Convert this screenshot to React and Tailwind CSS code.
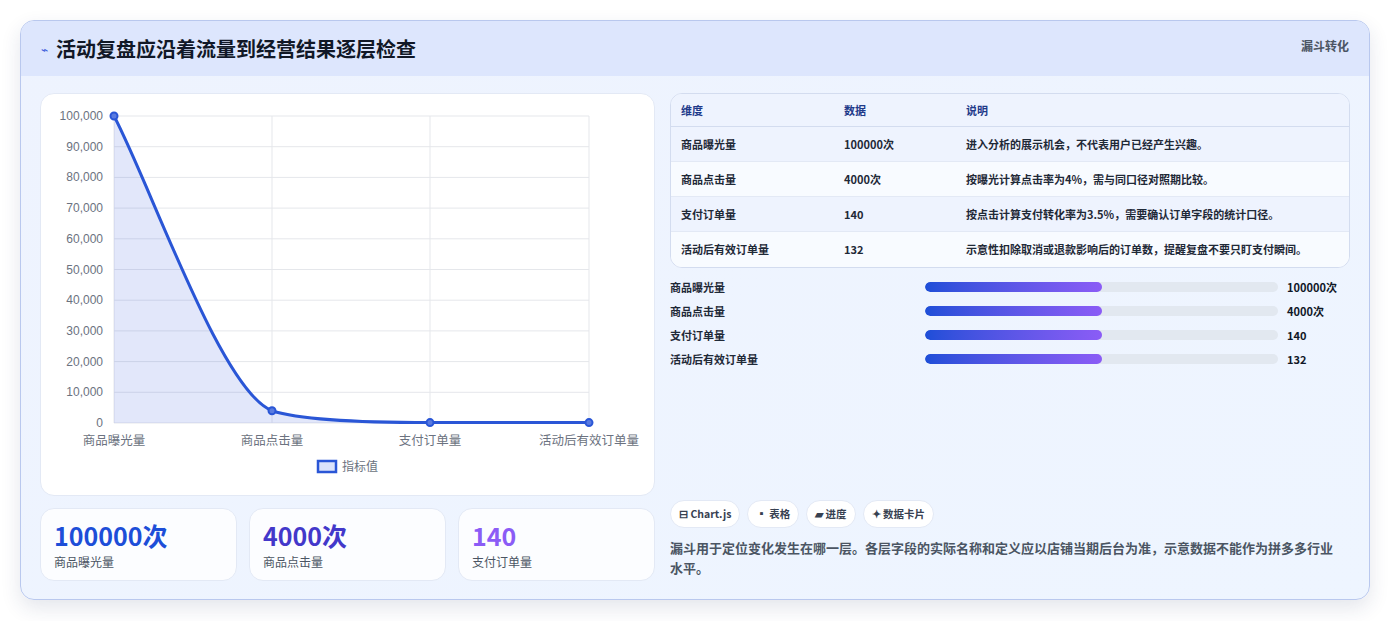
export default function App() {
  const f = { fontFamily: '"Noto Sans CJK SC","Noto Sans",sans-serif' };
  const yl = ["100,000","90,000","80,000","70,000","60,000","50,000","40,000","30,000","20,000","10,000","0"];
  const X0 = 73, X1 = 548, Y0 = 22, Y1 = 329;
  const xs = [73, 231, 389, 548];
  const yv = v => Y1 - (v / 100000) * (Y1 - Y0);
  const pts = [100000, 4000, 140, 132].map((v, i) => [xs[i], yv(v)]);
  const line = `M${pts[0][0]},${pts[0][1]} C110,${pts[0][1] + 70} 180,${pts[1][1] - 20} ${pts[1][0]},${pts[1][1]} C262,${pts[1][1] + 10} 340,${pts[2][1]} ${pts[2][0]},${pts[2][1]} C440,${pts[2][1]} 500,${pts[3][1]} ${pts[3][0]},${pts[3][1]}`;
  const rows = [
    ["商品曝光量", "100000次", "进入分析的展示机会，不代表用户已经产生兴趣。"],
    ["商品点击量", "4000次", "按曝光计算点击率为4%，需与同口径对照期比较。"],
    ["支付订单量", "140", "按点击计算支付转化率为3.5%，需要确认订单字段的统计口径。"],
    ["活动后有效订单量", "132", "示意性扣除取消或退款影响后的订单数，提醒复盘不要只盯支付瞬间。"],
  ];
  return (
    <div className="w-[1390px] h-[621px] bg-white pt-5 px-5" style={f}>
      <div className="h-[580px] rounded-[14px] border border-[#b9c8ee] shadow-[0_8px_20px_rgba(30,50,100,0.12)] overflow-hidden bg-gradient-to-br from-[#eef3fe] to-[#eef5ff] flex flex-col">
        <div className="h-[55px] bg-[#dde6fd] flex items-start justify-between px-5 shrink-0">
          <div className="flex items-center gap-2 mt-[13px]">
            <span className="text-[#3b5bdb] text-[12px]">⌁</span>
            <span className="text-[20px] font-bold text-[#111827]">活动复盘应沿着流量到经营结果逐层检查</span>
          </div>
          <span className="text-[12px] font-bold text-[#4b5563] mt-[16px]">漏斗转化</span>
        </div>
        <div className="flex gap-[15px] px-[19px] pt-[17px]">
          <div className="w-[615px] flex flex-col gap-3">
            <div className="h-[403px] bg-white rounded-[14px] border border-[#e3e9f5]">
              <svg width="615" height="403" className="block">
                {yl.map((t, i) => {
                  const y = Y0 + i * (Y1 - Y0) / 10;
                  return <g key={t}><line x1={X0} x2={X1} y1={y} y2={y} stroke="#e5e7eb" /><text x={62} y={y + 4} textAnchor="end" fontSize="12" fill="#6b7280" fontFamily="Liberation Sans, sans-serif">{t}</text></g>;
                })}
                {xs.map(x => <line key={x} x1={x} x2={x} y1={Y0} y2={Y1} stroke="#e5e7eb" />)}
                <path d={`${line} L548,329 L73,329 Z`} fill="rgba(59,91,219,0.15)" />
                <path d={line} fill="none" stroke="#2a56d6" strokeWidth="3" />
                {pts.map(([x, y]) => <circle key={x} cx={x} cy={y} r="3.5" fill="#5a7be0" stroke="#2a56d6" strokeWidth="2" />)}
                {["商品曝光量", "商品点击量", "支付订单量", "活动后有效订单量"].map((t, i) => <text key={t} x={xs[i]} y={351} textAnchor="middle" fontSize="12.5" fill="#6b7280">{t}</text>)}
                <rect x="277" y="367" width="18" height="11" fill="#dbe3fb" stroke="#2a56d6" strokeWidth="2.5" />
                <text x="301" y="377" fontSize="12" fill="#6b7280">指标值</text>
              </svg>
            </div>
            <div className="grid grid-cols-3 gap-3">
              {[["100000次", "text-[#1d4ed8]", "商品曝光量"], ["4000次", "text-[#4338ca]", "商品点击量"], ["140", "text-[#8b5cf6]", "支付订单量"]].map(([v, c, l]) => (
                <div key={l} className="h-[73px] bg-white/80 rounded-[14px] border border-[#e3e9f5] px-[13px] pt-[10px]">
                  <div className={`text-[25px] font-bold leading-[32px] ${c}`}>{v}</div>
                  <div className="text-[12px] text-[#4b5563] mt-[2px]">{l}</div>
                </div>
              ))}
            </div>
          </div>
          <div className="flex-1 flex flex-col">
            <div className="rounded-[12px] border border-[#d3dcef] overflow-hidden bg-[#f7f9ff]">
              <div className="grid grid-cols-[163px_122px_1fr] h-[33px] items-center px-[10px] text-[11px] font-bold text-[#1e3a8a] bg-[#eef3fe] border-b border-[#d3dcef]">
                <span>维度</span><span>数据</span><span>说明</span>
              </div>
              {rows.map((r, i) => (
                <div key={r[0]} className={`grid grid-cols-[163px_122px_1fr] h-[35px] items-center px-[10px] text-[11px] font-semibold text-[#1f2937] ${i % 2 ? "bg-[#f8fbff]" : "bg-[#eef3fe]"} ${i < 3 ? "border-b border-[#e3e9f5]" : ""}`}>
                  <span>{r[0]}</span><span>{r[1]}</span><span>{r[2]}</span>
                </div>
              ))}
            </div>
            <div className="flex flex-col gap-[10px] mt-[12px]">
              {rows.map(r => (
                <div key={r[0]} className="flex items-center h-[14px] text-[11px] font-semibold text-[#1f2937]">
                  <span className="w-[255px]">{r[0]}</span>
                  <div className="w-[353px] h-[10px] rounded-full bg-[#e2e8f0] overflow-hidden">
                    <div className="w-1/2 h-full rounded-full bg-gradient-to-r from-[#1d4ed8] to-[#8b5cf6]" />
                  </div>
                  <span className="ml-[9px] font-bold text-[#111827]">{r[1]}</span>
                </div>
              ))}
            </div>
            <div className="flex gap-[7px] mt-[134px]">
              {["⊟ Chart.js", "▪ 表格", "▰ 进度", "✦ 数据卡片"].map(t => (
                <span key={t} className="h-[28px] px-[8px] flex items-center rounded-full bg-white border border-[#e3e9f5] text-[10.5px] font-bold text-[#374151]">{t}</span>
              ))}
            </div>
            <p className="text-[13px] font-semibold text-[#4b5563] leading-[20px] mt-[10px] pr-[10px]">漏斗用于定位变化发生在哪一层。各层字段的实际名称和定义应以店铺当期后台为准，示意数据不能作为拼多多行业水平。</p>
          </div>
        </div>
      </div>
    </div>
  );
}
